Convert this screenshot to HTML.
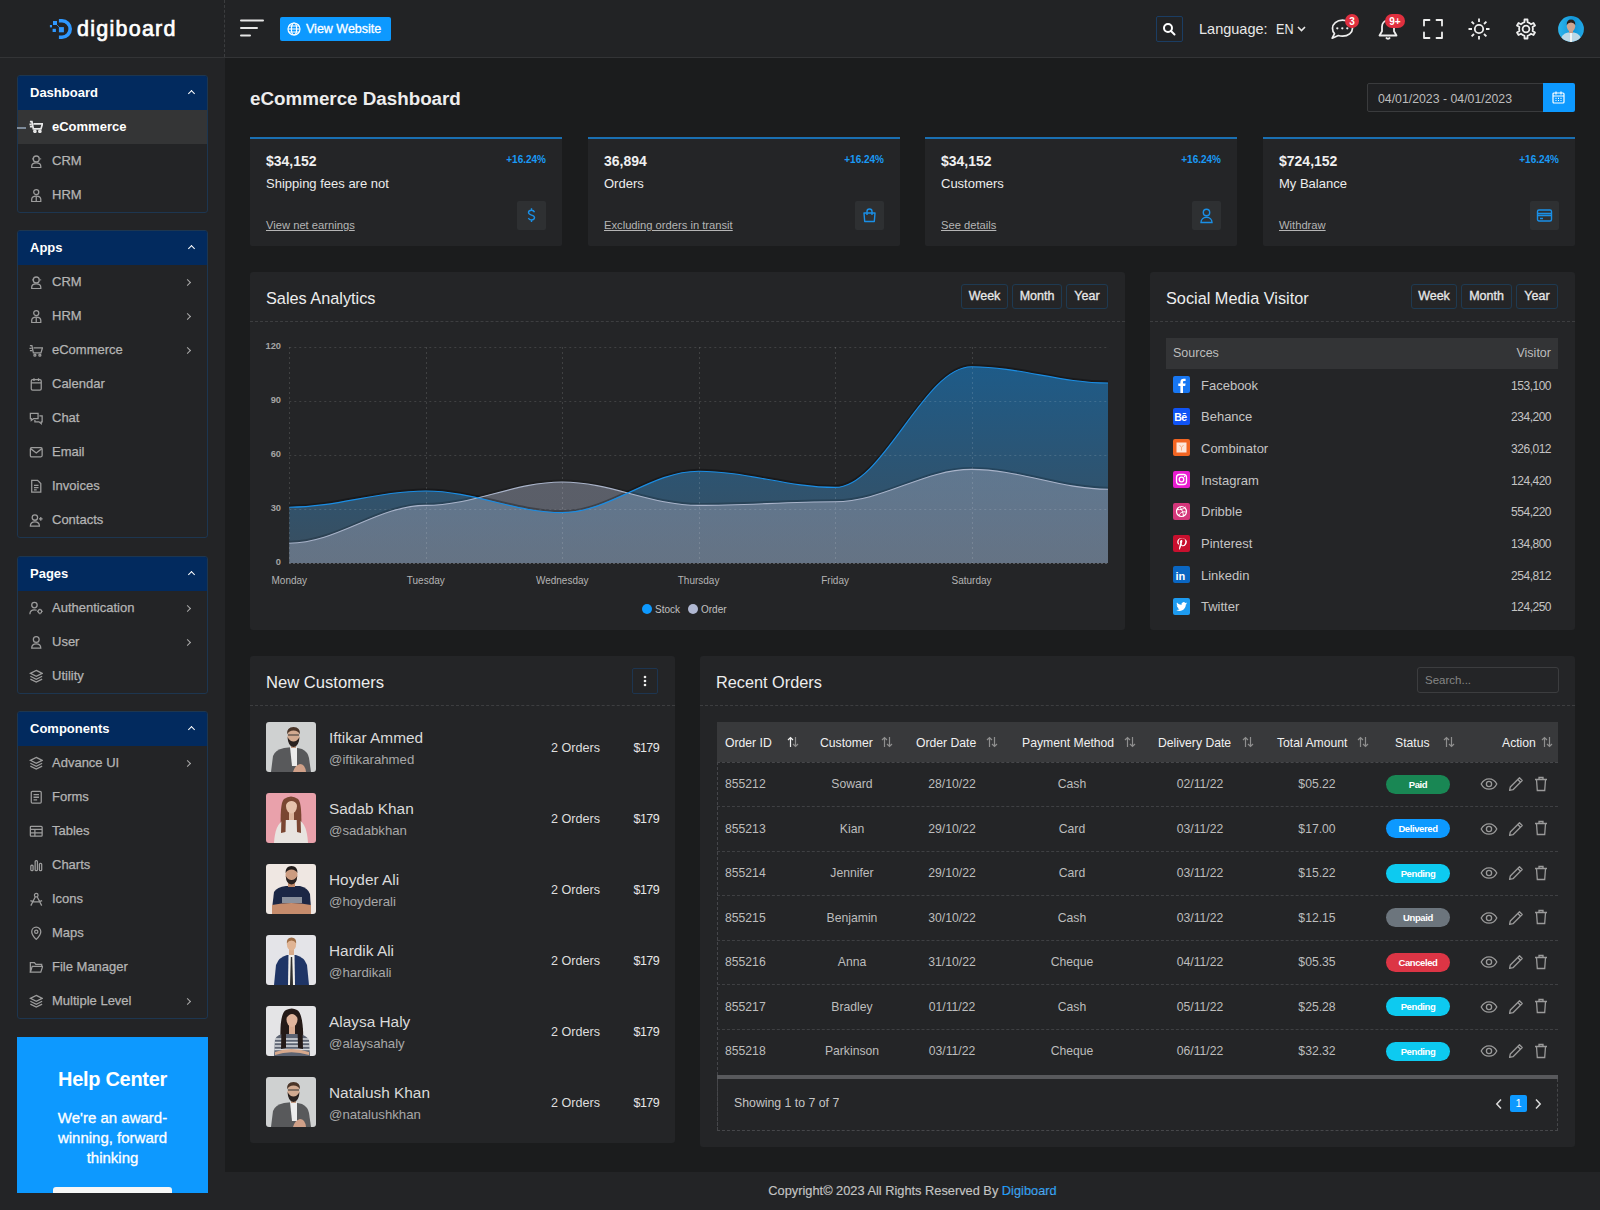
<!DOCTYPE html>
<html><head><meta charset="utf-8">
<style>
*{box-sizing:border-box;margin:0;padding:0}
html,body{width:1600px;height:1210px;overflow:hidden;background:#1b1c1d;font-family:"Liberation Sans",sans-serif;color:#d4d4d4}
.abs{position:absolute}
#hdr{position:absolute;left:0;top:0;width:1600px;height:58px;background:#222325;border-bottom:1px solid #333436}
#side{position:absolute;left:0;top:58px;width:225px;height:1152px;background:#232426}
#hdrdiv{position:absolute;left:224px;top:0;height:57px;border-left:1px dashed #3c3d3f}
#main{position:absolute;left:225px;top:58px;width:1375px;height:1114px;background:#1b1c1d}
#foot{position:absolute;left:225px;top:1172px;width:1375px;height:38px;background:#232426;text-align:center;font-size:12.8px;line-height:38px;color:#c4c4c4;-webkit-text-stroke:0.15px #c4c4c4}
#foot b{font-weight:normal;color:#0d99ff}
.grp{position:absolute;left:17px;width:191px;border:1px solid #1d3650;border-radius:3px;background:#232426;overflow:hidden}
.gh{height:34px;background:#022a5e;color:#fff;font-size:13px;font-weight:bold;padding-left:12px;line-height:34px;position:relative}
.gh:after{content:"";position:absolute;right:13px;top:15px;width:4px;height:4px;border-left:1.5px solid #fff;border-top:1.5px solid #fff;transform:rotate(45deg)}
.it{height:34px;line-height:34px;font-size:13px;color:#b4b4b4;padding-left:34px;position:relative;-webkit-text-stroke:0.25px #b4b4b4}
.it svg{position:absolute;left:10.5px;top:9.5px;width:14.5px;height:14.5px;fill:none;stroke:#9c9c9c;stroke-width:1.4}
.it.ch:after{content:"";position:absolute;right:17px;top:15px;width:4px;height:4px;border-right:1.3px solid #aaa;border-top:1.3px solid #aaa;transform:rotate(45deg)}
.it.act{background:#343536;color:#fff;font-weight:bold;-webkit-text-stroke:0}
.it.act svg{stroke:#e8e8e8;stroke-width:1.9;top:8.5px}
.card{position:absolute;background:#242527;border-radius:2px}

.stat{position:absolute;top:79px;width:312px;height:109px;background:#242527;border-top:2px solid #1a6fb2;border-radius:0 0 2px 2px}
.stat .v{position:absolute;left:16px;top:14px;font-size:14px;font-weight:bold;color:#f0f0f0}
.stat .p{position:absolute;right:16px;top:15px;font-size:10px;font-weight:bold;color:#1a9af5}
.stat .l{position:absolute;left:16px;top:37px;font-size:13px;color:#ececec}
.stat .u{position:absolute;left:16px;top:80px;font-size:11.2px;color:#b5b5b5;text-decoration:underline;text-underline-offset:1px}
.stat .ib{position:absolute;right:16px;top:62px;width:29px;height:29px;background:#2e3032;border-radius:2px}
.stat .ib svg{position:absolute;left:6px;top:6px;width:17px;height:17px;fill:none;stroke:#1a8fe6;stroke-width:1.4}

.pnl{position:absolute;background:#242527;border-radius:3px}
.pt{position:absolute;left:16px;font-size:16.3px;color:#ededed;margin-top:1.5px}
.pline{position:absolute;left:0;right:0;border-top:1px dashed #3d3e40}
.btn{position:absolute;top:12px;height:25px;border:1px solid #1e3a52;border-radius:3px;font-size:12.5px;color:#e8e8e8;line-height:23px;text-align:center;-webkit-text-stroke:0.3px #e8e8e8}
.srow{position:absolute;left:16px;width:392px;height:31px;font-size:13px;color:#c4c4c4}
.srow .ic{position:absolute;left:7px;top:7px;width:17px;height:17px;border-radius:2px}
.srow .n{position:absolute;left:35px;top:8.5px}
.srow .c{position:absolute;right:7px;top:9.5px;font-size:12px;letter-spacing:-0.5px}

.cust{position:absolute;left:16px;width:393px;height:50px}
.cust .ph{position:absolute;left:0;top:0;width:50px;height:50px;border-radius:3px;overflow:hidden}
.cust .nm{position:absolute;left:63px;top:6.5px;font-size:15.4px;color:#dadada}
.cust .hd{position:absolute;left:63px;top:30px;font-size:13.2px;color:#a8a8a8}
.cust .or{position:absolute;left:285px;top:19px;font-size:12.6px;color:#dedede}
.cust .pr{position:absolute;right:0;top:19px;font-size:12.5px;color:#e6e6e6;letter-spacing:-0.6px}
.th{position:absolute;top:1px;height:40px;line-height:40px;font-size:12.2px;color:#f0f0f0}
.td{position:absolute;font-size:12.2px;color:#bdbdbd;text-align:center;margin-top:1px}
.bdg{position:absolute;width:64px;height:19px;border-radius:10px;color:#fff;font-size:9.5px;font-weight:bold;line-height:19px;text-align:center;letter-spacing:-0.4px}
</style></head><body>
<div id="hdr">
 <svg class="abs" style="left:45px;top:14px" width="32" height="28" viewBox="0 0 32 28">
  <path d="M13.9 5H17A10 10 0 0 1 17 25H13.9V21.4H17A6.4 6.4 0 0 0 17 8.6H13.9Z" fill="#2f98ff"/>
  <rect x="13.9" y="13.1" width="5" height="5.2" fill="#2f98ff"/>
  <rect x="8" y="7" width="4" height="4" fill="#2f98ff"/>
  <rect x="7.6" y="14.8" width="3.3" height="3.2" fill="#2f98ff"/>
  <rect x="4.9" y="11" width="2.1" height="2.4" fill="#2f98ff"/>
  <path d="M11.5 10.5L14.5 13.5" stroke="#2f98ff" stroke-width="0.7"/>
 </svg>
 <div class="abs" style="left:77px;top:17px;font-size:21.5px;color:#fff;letter-spacing:1.25px;-webkit-text-stroke:0.7px #fff">digiboard</div>
 <svg class="abs" style="left:240px;top:18px" width="24" height="20" viewBox="0 0 24 20"><path d="M1 2.5H23M1 10H17M1 17.5H10" stroke="#e6e6e6" stroke-width="2" stroke-linecap="round"/></svg>
 <div class="abs" style="left:280px;top:17px;width:111px;height:24px;background:#0d99ff;border-radius:2px;color:#fff;font-size:12.5px;line-height:24px;padding-left:26px;-webkit-text-stroke:0.3px #fff">View Website</div>
 <svg class="abs" style="left:287px;top:22px" width="14" height="14" viewBox="0 0 14 14" fill="none" stroke="#fff" stroke-width="1.2"><circle cx="7" cy="7" r="6"/><ellipse cx="7" cy="7" rx="2.6" ry="6"/><path d="M1 7H13M2 4H12M2 10H12"/></svg>
 <div class="abs" style="left:1156px;top:16px;width:27px;height:26px;border:1px solid #1b3d63;border-radius:2px"></div>
 <svg class="abs" style="left:1162px;top:22px" width="14" height="14" viewBox="0 0 14 14" fill="none" stroke="#fff" stroke-width="2"><circle cx="6" cy="6" r="4"/><path d="M9 9L12.5 12.5" stroke-linecap="round"/></svg>
 <div class="abs" style="left:1199px;top:21px;font-size:14.5px;color:#e8e8e8;white-space:pre">Language:</div><div class="abs" style="left:1275.5px;top:21px;font-size:14.5px;color:#e8e8e8;transform:scaleX(0.87);transform-origin:0 0">EN</div>
 <svg class="abs" style="left:1297px;top:26px" width="9" height="6" viewBox="0 0 9 6"><path d="M1 1L4.5 4.5L8 1" fill="none" stroke="#e8e8e8" stroke-width="1.6"/></svg>
 <svg class="abs" style="left:1329px;top:17px" width="26" height="24" viewBox="0 0 26 24" fill="none" stroke="#eee" stroke-width="1.7" stroke-linejoin="round"><path d="M13.5 3.2C19.300 3.200 23.500 6.800 23.500 11.200C23.500 15.600 19.300 19.200 13.500 19.200C12 19.200 10.600 19 9.300 18.500L3.200 21.200L5.500 16.600C4 15.200 3.500 13.300 3.500 11.200C3.500 6.800 7.700 3.200 13.500 3.200Z"/><circle cx="8.3" cy="11.3" r="1.15" fill="#eee" stroke="none"/><circle cx="13.3" cy="11.3" r="1.15" fill="#eee" stroke="none"/><circle cx="18.3" cy="11.3" r="1.15" fill="#eee" stroke="none"/></svg>
 <div class="abs" style="left:1345px;top:14px;width:14px;height:14px;border-radius:7px;background:#e0303f;color:#fff;font-size:10px;font-weight:bold;line-height:15px;text-align:center">3</div>
 <svg class="abs" style="left:1376px;top:17px" width="24" height="25" viewBox="0 0 24 25" fill="none" stroke="#eee" stroke-width="1.8"><path d="M12 3.5c-3.6 0-6 2.8-6 6.3v4.5L3.5 18.5h17L18 14.3V9.8c0-3.5-2.4-6.3-6-6.3z" stroke-linejoin="round"/><path d="M10 20.6c.5.8 1.1 1.2 2 1.2s1.5-.4 2-1.2"/></svg>
 <div class="abs" style="left:1385px;top:14px;width:20px;height:14px;border-radius:7px;background:#e0303f;color:#fff;font-size:10px;font-weight:bold;line-height:15px;text-align:center">9+</div>
 <svg class="abs" style="left:1422px;top:18px" width="22" height="22" viewBox="0 0 22 22" fill="none" stroke="#eee" stroke-width="1.8" stroke-linejoin="round" stroke-linecap="round"><path d="M2 7.5V2H7.5M14.5 2H20V7.5M20 14.5V20H14.5M7.5 20H2V14.5"/></svg>
 <svg class="abs" style="left:1467px;top:17px" width="24" height="24" viewBox="0 0 24 24" fill="none" stroke="#eee" stroke-width="1.8"><circle cx="12" cy="12" r="4.2"/><path d="M12 1.5v3.5M12 19v3.5M1.5 12H5M19 12h3.5M4.6 4.6l2.4 2.4M17 17l2.4 2.4M4.6 19.4L7 17M17 7l2.4-2.4"/></svg>
 <svg class="abs" style="left:1514px;top:17px" width="24" height="24" viewBox="0 0 24 24" fill="none" stroke="#eee" stroke-width="1.8" stroke-linejoin="round"><path d="M8.65 5.97 L10.45 5.28 L10.50 2.52 L13.50 2.52 L13.55 5.28 L15.55 6.09 L17.05 7.29 L19.46 5.96 L20.96 8.56 L18.60 9.98 L18.90 12.12 L18.60 14.02 L20.96 15.44 L19.46 18.04 L17.05 16.71 L15.35 18.03 L13.55 18.72 L13.50 21.48 L10.50 21.48 L10.45 18.72 L8.45 17.91 L6.95 16.71 L4.54 18.04 L3.04 15.44 L5.40 14.02 L5.10 11.88 L5.40 9.98 L3.04 8.56 L4.54 5.96 L6.95 7.29Z"/><circle cx="12" cy="12" r="3.4"/></svg>
 <svg class="abs" style="left:1558px;top:16px" width="26" height="26" viewBox="0 0 26 26"><defs><clipPath id="avc"><circle cx="13" cy="13" r="12.9"/></clipPath><linearGradient id="avg" x1="0" y1="0" x2="1" y2="0"><stop offset="0" stop-color="#2db4ec"/><stop offset="0.6" stop-color="#1296d8"/><stop offset="1" stop-color="#22a8e6"/></linearGradient></defs><g clip-path="url(#avc)"><rect width="26" height="26" fill="url(#avg)"/><path d="M2 26Q3 17.5 10 16.5L16 16.5Q23 17.5 24 26Z" fill="#bcd8e6"/><rect x="12" y="17" width="2" height="9" fill="#f0f6f8"/><rect x="11" y="12.5" width="4" height="4.5" fill="#c49c88"/><ellipse cx="13" cy="10.3" rx="4.2" ry="5.3" fill="#cfa590"/><path d="M8.7 9Q8.6 3.5 13 3.5Q17.4 3.5 17.3 9Q16 6.5 13 6.5Q10 6.5 8.7 9Z" fill="#2a201c"/></g></svg>
</div>
<div id="hdrdiv"></div>
<div id="side"><div class="grp" style="top:17px"><div class="gh">Dashboard</div><div class="it act"><svg viewBox="0 0 16 16"><path d="M1 3h2.2l1.6 8h8.4l1.6-5.5H5"/><circle cx="6.5" cy="13.5" r="1.1"/><circle cx="12" cy="13.5" r="1.1"/><path d="M0.5 6h2.5M1 8.5h2.5"/></svg>eCommerce</div><div class="it "><svg viewBox="0 0 16 16"><circle cx="8" cy="5.5" r="3.3"/><path d="M3 15v-1.5c0-2.2 2-3.8 5-3.8s5 1.6 5 3.8V15z"/><path d="M4.6 5.5h-1M12.4 5.5h1"/></svg>CRM</div><div class="it "><svg viewBox="0 0 16 16"><circle cx="8" cy="4.5" r="2.8"/><path d="M3 15v-2.5c0-2 2.2-3.5 5-3.5s5 1.5 5 3.5V15z"/><path d="M8 9v6"/></svg>HRM</div></div><div class="abs" style="left:17px;top:69px;width:9px;height:2px;background:#7d8a99"></div><div class="grp" style="top:172px"><div class="gh">Apps</div><div class="it ch"><svg viewBox="0 0 16 16"><circle cx="8" cy="5.5" r="3.3"/><path d="M3 15v-1.5c0-2.2 2-3.8 5-3.8s5 1.6 5 3.8V15z"/><path d="M4.6 5.5h-1M12.4 5.5h1"/></svg>CRM</div><div class="it ch"><svg viewBox="0 0 16 16"><circle cx="8" cy="4.5" r="2.8"/><path d="M3 15v-2.5c0-2 2.2-3.5 5-3.5s5 1.5 5 3.5V15z"/><path d="M8 9v6"/></svg>HRM</div><div class="it ch"><svg viewBox="0 0 16 16"><path d="M1 3h2.2l1.6 8h8.4l1.6-5.5H5"/><circle cx="6.5" cy="13.5" r="1.1"/><circle cx="12" cy="13.5" r="1.1"/><path d="M0.5 6h2.5M1 8.5h2.5"/></svg>eCommerce</div><div class="it "><svg viewBox="0 0 16 16"><rect x="2.5" y="3" width="11" height="11.5" rx="1.5"/><path d="M2.5 6.5h11M5.5 1.5v3M10.5 1.5v3"/></svg>Calendar</div><div class="it "><svg viewBox="0 0 16 16"><path d="M1.5 2.5h8.5v6H5l-2.5 2v-2h-1z"/><path d="M11.5 5.5h3v6.5h-1v2l-2.5-2H6.5v-2"/></svg>Chat</div><div class="it "><svg viewBox="0 0 16 16"><rect x="1.5" y="3" width="13" height="10" rx="1.3"/><path d="M1.8 4l6.2 4.8 6.2-4.8"/></svg>Email</div><div class="it "><svg viewBox="0 0 16 16"><path d="M3 1.5h6.5l3.5 3.5v9.5H3z"/><path d="M5.5 7h5M5.5 9.5h5M5.5 12h3"/></svg>Invoices</div><div class="it "><svg viewBox="0 0 16 16"><circle cx="6.5" cy="5" r="3"/><path d="M1.5 14.5c0-3 2.2-4.8 5-4.8s5 1.8 5 4.8z"/><path d="M13 4.5v4M11 6.5h4"/></svg>Contacts</div></div><div class="grp" style="top:498px"><div class="gh">Pages</div><div class="it ch"><svg viewBox="0 0 16 16"><circle cx="6" cy="4.5" r="3"/><path d="M1 14.5c0-3 2.2-4.8 5-4.8 1 0 1.8.2 2.5.5"/><circle cx="12" cy="11.5" r="2"/><path d="M12 8.5v1M12 13.5v1M9 11.5h1M14 11.5h1"/></svg>Authentication</div><div class="it ch"><svg viewBox="0 0 16 16"><circle cx="8" cy="5" r="3.2"/><path d="M3 14.5c0-3 2.2-4.8 5-4.8s5 1.8 5 4.8z"/></svg>User</div><div class="it "><svg viewBox="0 0 16 16"><path d="M8 1.5l6.5 3.3L8 8.1 1.5 4.8z"/><path d="M1.5 8l6.5 3.3L14.5 8M1.5 11.2l6.5 3.3 6.5-3.3"/></svg>Utility</div></div><div class="grp" style="top:653px"><div class="gh">Components</div><div class="it ch"><svg viewBox="0 0 16 16"><path d="M8 1.5l6.5 3.3L8 8.1 1.5 4.8z"/><path d="M1.5 8l6.5 3.3L14.5 8M1.5 11.2l6.5 3.3 6.5-3.3"/></svg>Advance UI</div><div class="it "><svg viewBox="0 0 16 16"><rect x="2.5" y="1.5" width="11" height="13" rx="1.3"/><path d="M5 5h6M5 8h6M5 11h4"/></svg>Forms</div><div class="it "><svg viewBox="0 0 16 16"><rect x="1.5" y="2.5" width="13" height="11" rx="1"/><path d="M1.5 6h13M1.5 9.8h13M6.5 6v7.5"/></svg>Tables</div><div class="it "><svg viewBox="0 0 16 16"><rect x="2" y="8" width="2.5" height="6" rx="1"/><rect x="6.8" y="3" width="2.5" height="11" rx="1"/><rect x="11.5" y="6" width="2.5" height="8" rx="1"/></svg>Charts</div><div class="it "><svg viewBox="0 0 16 16"><circle cx="8" cy="3.5" r="2"/><path d="M7 5.3L2 15M9 5.3l5 9.7M1.5 9.5c2 1 4.2 1.5 6.5 1.5s4.5-.5 6.5-1.5"/></svg>Icons</div><div class="it "><svg viewBox="0 0 16 16"><path d="M8 14.8s-5-4.8-5-8.5a5 5 0 0110 0c0 3.7-5 8.5-5 8.5z"/><circle cx="8" cy="6.3" r="1.8"/></svg>Maps</div><div class="it "><svg viewBox="0 0 16 16"><path d="M1.5 13.5V3h4.5l1.5 1.8h6.5v2"/><path d="M1.5 13.5l2-6.5h11.5l-2 6.5z"/></svg>File Manager</div><div class="it ch"><svg viewBox="0 0 16 16"><path d="M8 1.5l6.5 3.3L8 8.1 1.5 4.8z"/><path d="M1.5 8l6.5 3.3L14.5 8M1.5 11.2l6.5 3.3 6.5-3.3"/></svg>Multiple Level</div></div><div class="abs" style="left:17px;top:979px;width:191px;height:156px;background:#0d99ff;text-align:center;color:#fff;overflow:hidden">
<div style="position:absolute;left:0;width:191px;top:31px;font-size:20px;font-weight:bold;letter-spacing:-0.3px">Help Center</div>
<div style="position:absolute;left:15px;width:161px;top:71px;font-size:15px;line-height:20px;-webkit-text-stroke:0.3px #fff">We're an award-winning, forward thinking</div>
<div style="position:absolute;left:36px;top:150px;width:119px;height:20px;background:#f6f6f6;border-radius:3px"></div>
</div></div>
<div id="main">
<div class="abs" style="left:25px;top:30px;font-size:18.8px;font-weight:bold;color:#ededed">eCommerce Dashboard</div>
<div class="abs" style="left:1142px;top:25px;width:177px;height:29px;border:1px solid #3a3b3d;border-radius:2px 0 0 2px;background:#1f2022;font-size:12.3px;color:#bdbdbd;line-height:30px;padding-left:10px">04/01/2023 - 04/01/2023</div>
<div class="abs" style="left:1318px;top:25px;width:32px;height:29px;background:#0d99ff;border-radius:0 2px 2px 0"></div>
<svg class="abs" style="left:1327px;top:33px" width="13" height="13" viewBox="0 0 13 13" fill="none" stroke="#fff" stroke-width="1.2"><rect x="1" y="2" width="11" height="10" rx="1"/><path d="M1 5h11M4 0.5v3M9 0.5v3M3.5 7.3h1M6 7.3h1M8.5 7.3h1M3.5 9.5h1M6 9.5h1M8.5 9.5h1"/></svg>

<div class="stat" style="left:25px"><div class="v">$34,152</div><div class="p">+16.24%</div><div class="l">Shipping fees are not</div><div class="u">View net earnings</div>
<div class="ib"><svg viewBox="0 0 17 17"><path d="M11.5 5.2c-.4-1.2-1.6-2-3-2-1.8 0-3 1-3 2.4 0 3.2 6 1.8 6 5 0 1.4-1.3 2.4-3 2.4-1.5 0-2.7-.8-3.1-2M8.5 1.2v2M8.5 13v2"/></svg></div></div>
<div class="stat" style="left:363px"><div class="v">36,894</div><div class="p">+16.24%</div><div class="l">Orders</div><div class="u">Excluding orders in transit</div>
<div class="ib"><svg viewBox="0 0 17 17"><path d="M3 6h11l-.7 8.5H3.7z" stroke-linejoin="round"/><path d="M6 8V4.5a2.5 2.5 0 015 0V8"/></svg></div></div>
<div class="stat" style="left:700px"><div class="v">$34,152</div><div class="p">+16.24%</div><div class="l">Customers</div><div class="u">See details</div>
<div class="ib"><svg viewBox="0 0 17 17"><circle cx="8.5" cy="5.5" r="3.2"/><path d="M3 15.5c0-3.2 2.4-5.2 5.5-5.2s5.5 2 5.5 5.2z"/></svg></div></div>
<div class="stat" style="left:1038px"><div class="v">$724,152</div><div class="p">+16.24%</div><div class="l">My Balance</div><div class="u">Withdraw</div>
<div class="ib"><svg viewBox="0 0 17 17"><rect x="1.5" y="3" width="14" height="11" rx="1.5"/><path d="M1.5 6.5h14M1.5 8.5h14M4 11.5h3"/></svg></div></div>
<div class="pnl" style="left:25px;top:214px;width:875px;height:358px">
<div class="pt" style="top:15px">Sales Analytics</div>
<div class="btn" style="left:711px;width:47px">Week</div><div class="btn" style="left:762px;width:50px">Month</div><div class="btn" style="left:816px;width:42px">Year</div>
<div class="pline" style="top:49px"></div>
</div>
<div class="pnl" style="left:925px;top:214px;width:425px;height:358px">
<div class="pt" style="top:15px">Social Media Visitor</div>
<div class="btn" style="left:261px;width:46px">Week</div><div class="btn" style="left:311px;width:51px">Month</div><div class="btn" style="left:366px;width:42px">Year</div>
<div class="pline" style="top:49px"></div>
<div class="abs" style="left:16px;top:66px;width:392px;height:31px;background:#333436;font-size:12.5px;color:#bdbdbd;line-height:31px"><span style="position:absolute;left:7px">Sources</span><span style="position:absolute;right:7px">Visitor</span></div>
<div class="srow" style="top:97.0px"><svg class="ic" style="background:#1877f2" viewBox="0 0 17 17"><path d="M10 17V10h2.2l.4-2.5H10V6.2c0-.8.3-1.2 1.2-1.2h1.4V2.8c-.3 0-1.1-.1-2-.1-2 0-3.2 1.2-3.2 3.3v1.5H5.3V10h2.1v7" fill="#fff"/></svg><span class="n">Facebook</span><span class="c">153,100</span></div>
<div class="srow" style="top:128.7px"><svg class="ic" style="background:#1054f5" viewBox="0 0 17 17"><text x="1.2" y="12.8" font-size="10.5" font-weight="bold" fill="#fff" font-family="Liberation Sans" letter-spacing="-0.5">Bē</text></svg><span class="n">Behance</span><span class="c">234,200</span></div>
<div class="srow" style="top:160.4px"><svg class="ic" style="background:#f26522" viewBox="0 0 17 17"><rect x="3.5" y="3.5" width="10" height="10" fill="#fde6da"/><path d="M6.5 6l2 2.5 2-2.5M8.5 8.5v3" stroke="#f5a070" stroke-width=".8" fill="none"/></svg><span class="n">Combinator</span><span class="c">326,012</span></div>
<div class="srow" style="top:192.1px"><svg class="ic" style="background:#e81cd0" viewBox="0 0 17 17"><rect x="3.5" y="3.5" width="10" height="10" rx="3" fill="none" stroke="#fff" stroke-width="1.3"/><circle cx="8.5" cy="8.5" r="2.3" fill="none" stroke="#fff" stroke-width="1.3"/><circle cx="11.5" cy="5.5" r=".7" fill="#fff"/></svg><span class="n">Instagram</span><span class="c">124,420</span></div>
<div class="srow" style="top:223.8px"><svg class="ic" style="background:#d4367a" viewBox="0 0 17 17"><circle cx="8.5" cy="8.5" r="5" fill="none" stroke="#fff" stroke-width="1.2"/><path d="M4 6.5c3 .5 6.5 0 8.5-2.5M5.5 13c1.5-3.5 4.5-5 8-3.8M6.8 3.8c2 2.5 3.5 6 3.7 9.5" fill="none" stroke="#fff" stroke-width="1"/></svg><span class="n">Dribble</span><span class="c">554,220</span></div>
<div class="srow" style="top:255.5px"><svg class="ic" style="background:#c8102e" viewBox="0 0 17 17"><path d="M8.8 3C5.8 3 4.2 5 4.2 7c0 1.2.5 2.2 1.4 2.6.2 0 .3 0 .3-.2l.2-.6c0-.2 0-.3-.1-.4-.3-.4-.5-.8-.5-1.5 0-1.9 1.4-3.6 3.7-3.6 2 0 3.1 1.2 3.1 2.9 0 2.2-1 4-2.4 4-.8 0-1.4-.7-1.2-1.5.2-1 .7-2 .7-2.7 0-.6-.3-1.1-1-1.1-.8 0-1.4.8-1.4 1.9 0 .7.2 1.2.2 1.2l-1 4c-.3 1.2 0 2.600 0 2.800h.2c.1-.2 1-1.300 1.300-2.500l.5-1.900c.3.5 1 .9 1.800.9 2.300 0 3.900-2.100 3.900-5C13.500 5 11.600 3 8.800 3z" fill="#fff"/></svg><span class="n">Pinterest</span><span class="c">134,800</span></div>
<div class="srow" style="top:287.2px"><svg class="ic" style="background:#0a66c2" viewBox="0 0 17 17"><text x="2.5" y="13.5" font-size="11" font-weight="bold" fill="#fff" font-family="Liberation Sans">in</text></svg><span class="n">Linkedin</span><span class="c">254,812</span></div>
<div class="srow" style="top:318.9px"><svg class="ic" style="background:#1d9bf0" viewBox="0 0 17 17"><path d="M14 5.2c-.4.2-.8.3-1.3.4.5-.3.8-.7 1-1.2-.4.3-.9.4-1.4.5a2.2 2.2 0 00-3.8 2C6.700 6.800 5.100 6 4 4.600c-.6 1-.3 2.300.7 3-.4 0-.7-.1-1-.3 0 1.100.8 2 1.800 2.200-.3.1-.7.1-1 0 .3.900 1.100 1.500 2.100 1.500A4.400 4.400 0 013.300 12c1 .6 2.100 1 3.300 1 4 0 6.300-3.400 6.200-6.400.5-.3.800-.7 1.100-1.200z" fill="#fff"/></svg><span class="n">Twitter</span><span class="c">124,250</span></div>
</div>
<div class="pnl" style="left:25px;top:598px;width:425px;height:487px">
<div class="pt" style="top:15px;font-size:16.6px">New Customers</div>
<div class="abs" style="left:382px;top:12px;width:26px;height:26px;border:1px solid #1d3550;border-radius:2px"></div>
<svg class="abs" style="left:393px;top:18px" width="4" height="14" viewBox="0 0 4 14"><circle cx="2" cy="3" r="1.3" fill="#eee"/><circle cx="2" cy="7" r="1.3" fill="#eee"/><circle cx="2" cy="11" r="1.3" fill="#eee"/></svg>
<div class="pline" style="top:49px"></div>
<div class="cust" style="top:66px"><svg class="ph" viewBox="0 0 50 50" style="background:#cfd1d1"><path d="M5 50L7 34Q9 28 18 26L27 25L36 27Q42 30 43 36L45 50Z" fill="#58595b"/><path d="M24 25H31L31 44H26Z" fill="#ececec"/><rect x="25" y="19" width="5" height="7" fill="#c49c84"/><ellipse cx="27.5" cy="14.5" rx="6" ry="8" fill="#d2aa90"/><path d="M21.5 15Q22 24.5 27.5 25Q33 24.5 33.5 15Q31 19.5 27.5 19.5Q24 19.5 21.5 15Z" fill="#2a2220"/><path d="M21 12.5Q20.5 5 27.5 5Q34.5 5 34 12.5Q32 8.5 27.5 8.5Q23 8.5 21 12.5Z" fill="#4a3528"/><path d="M22 13h11" stroke="#333" stroke-width="1"/><path d="M27 50Q29 43 34 42Q39 42 40 50Z" fill="#d0a088"/></svg><div class="nm">Iftikar Ammed</div><div class="hd">@iftikarahmed</div><div class="or">2 Orders</div><div class="pr">$179</div></div>
<div class="cust" style="top:137px"><svg class="ph" viewBox="0 0 50 50" style="background:#e9a1ab"><path d="M15 41Q13.5 10 18 6Q25 1 32 6Q36.5 10 35 41Z" fill="#7a4632"/><path d="M8 50Q9 31 18 27L33 27Q41 31 42 50Z" fill="#e8e4e0"/><path d="M15 40L15.5 22L20 20L19.5 39Z M35 40L34.5 22L30.5 20L31 39Z" fill="#7a4632"/><rect x="23" y="18" width="5" height="9" fill="#dcb49c"/><ellipse cx="25.5" cy="13" rx="5.5" ry="7.5" fill="#e6c2ac"/><path d="M19.5 12Q20 5 25.5 5Q31 5 31.5 12Q29 8 25.5 8Q22 8 19.5 12Z" fill="#7a4632"/></svg><div class="nm">Sadab Khan</div><div class="hd">@sadabkhan</div><div class="or">2 Orders</div><div class="pr">$179</div></div>
<div class="cust" style="top:208px"><svg class="ph" viewBox="0 0 50 50" style="background:#efe7e2"><path d="M6 45L8 28Q11 23 20 22L34 22Q42 24 44 30L45 45Z" fill="#1c2745"/><rect x="16" y="33" width="20" height="6" fill="#8a909c"/><path d="M6 41Q25 37 45 41L45 50L6 50Z" fill="#c68c6c"/><rect x="22" y="17" width="7" height="6" fill="#bf8868"/><ellipse cx="25.5" cy="11" rx="6" ry="8" fill="#cc9c80"/><path d="M19.8 12Q20 20 25.5 20.5Q31 20 31.2 12Q29 16 25.5 16Q22 16 19.8 12Z" fill="#2a2220"/><path d="M19.5 9Q19.5 2 25.5 2Q31.5 2 31.5 9Q29.5 5.5 25.5 5.5Q21.5 5.5 19.5 9Z" fill="#221c1a"/></svg><div class="nm">Hoyder Ali</div><div class="hd">@hoyderali</div><div class="or">2 Orders</div><div class="pr">$179</div></div>
<div class="cust" style="top:279px"><svg class="ph" viewBox="0 0 50 50" style="background:#e4e4e8"><path d="M8 50L10 30Q13 22 21 20L30 20Q38 22 41 30L43 50Z" fill="#1f3566"/><path d="M22.5 20H28.5L29 50H22Z" fill="#f2f0ec"/><path d="M24.8 22H26.2L27 50H24Z" fill="#2e2e2e"/><rect x="23" y="13" width="5" height="7" fill="#d8ac8c"/><ellipse cx="25.5" cy="9.5" rx="4.6" ry="6" fill="#e0b494"/><path d="M20.8 8.5Q20.5 2.5 25.5 2.5Q30.5 2.5 30.2 8.5Q28.5 5.5 25.5 5.5Q22.5 5.5 20.8 8.5Z" fill="#9c6c44"/></svg><div class="nm">Hardik Ali</div><div class="hd">@hardikali</div><div class="or">2 Orders</div><div class="pr">$179</div></div>
<div class="cust" style="top:350px"><svg class="ph" viewBox="0 0 50 50" style="background:#e4e4e6"><path d="M15 44Q12.5 8 20 4Q26 1 31 4Q38.5 8 37 44Z" fill="#241a18"/><path d="M8 50L9 33Q12 28 18 28L33 28Q40 29 43 34L44 50Z" fill="#5c6372"/><path d="M9 33H43M8.8 36.5H43.5M8.6 40H43.8M8.4 43.5H44" stroke="#d8dade" stroke-width="1.3"/><path d="M15 43L15.5 22L20 20L20 42Z M37 43L36.5 22L31.5 20L32 42Z" fill="#241a18"/><path d="M9 46Q25 40 43 46L43 49Q25 43.5 9 49Z" fill="#d6a88c"/><rect x="23" y="18" width="6" height="10" fill="#d8aa90"/><ellipse cx="26" cy="13.5" rx="5.5" ry="7.5" fill="#e0b49c"/><path d="M20.5 12Q21 5 26 5Q31 5 31.5 12Q29 8 26 8Q23 8 20.5 12Z" fill="#241a18"/></svg><div class="nm">Alaysa Haly</div><div class="hd">@alaysahaly</div><div class="or">2 Orders</div><div class="pr">$179</div></div>
<div class="cust" style="top:421px"><svg class="ph" viewBox="0 0 50 50" style="background:#cfd1d1"><path d="M5 50L7 34Q9 28 18 26L27 25L36 27Q42 30 43 36L45 50Z" fill="#58595b"/><path d="M24 25H31L31 44H26Z" fill="#ececec"/><rect x="25" y="19" width="5" height="7" fill="#c49c84"/><ellipse cx="27.5" cy="14.5" rx="6" ry="8" fill="#d2aa90"/><path d="M21.5 15Q22 24.5 27.5 25Q33 24.5 33.5 15Q31 19.5 27.5 19.5Q24 19.5 21.5 15Z" fill="#2a2220"/><path d="M21 12.5Q20.5 5 27.5 5Q34.5 5 34 12.5Q32 8.5 27.5 8.5Q23 8.5 21 12.5Z" fill="#4a3528"/><path d="M22 13h11" stroke="#333" stroke-width="1"/><path d="M27 50Q29 43 34 42Q39 42 40 50Z" fill="#d0a088"/></svg><div class="nm">Natalush Khan</div><div class="hd">@natalushkhan</div><div class="or">2 Orders</div><div class="pr">$179</div></div>
</div>
<div class="pnl" style="left:475px;top:598px;width:875px;height:491px">
<div class="pt" style="top:15px">Recent Orders</div>
<div class="abs" style="left:717px;top:11px;width:142px;height:26px;border:1px solid #3c3d3f;border-radius:3px;font-size:11.5px;color:#858585;line-height:25px;padding-left:7px">Search...</div>
<div class="pline" style="top:49px"></div>
<div class="abs" style="left:17px;top:66px;width:841px;height:40px;background:#38393b">
<div class="th" style="left:8px">Order ID</div><svg class="abs" style="left:70px;top:14px" width="12" height="12" viewBox="0 0 12 12" fill="none" stroke-width="1.2"><path d="M3.5 11V1.5M1 4l2.5-2.5L6 4" stroke="#f0f0f0"/><path d="M8.5 1v9.5M6 8l2.5 2.5L11 8" stroke="#8e8e8e"/></svg><div class="th" style="left:103px">Customer</div><svg class="abs" style="left:164px;top:14px" width="12" height="12" viewBox="0 0 12 12" fill="none" stroke-width="1.2"><path d="M3.5 11V1.5M1 4l2.5-2.5L6 4" stroke="#8e8e8e"/><path d="M8.5 1v9.5M6 8l2.5 2.5L11 8" stroke="#8e8e8e"/></svg><div class="th" style="left:199px">Order Date</div><svg class="abs" style="left:269px;top:14px" width="12" height="12" viewBox="0 0 12 12" fill="none" stroke-width="1.2"><path d="M3.5 11V1.5M1 4l2.5-2.5L6 4" stroke="#8e8e8e"/><path d="M8.5 1v9.5M6 8l2.5 2.5L11 8" stroke="#8e8e8e"/></svg><div class="th" style="left:305px">Payment Method</div><svg class="abs" style="left:407px;top:14px" width="12" height="12" viewBox="0 0 12 12" fill="none" stroke-width="1.2"><path d="M3.5 11V1.5M1 4l2.5-2.5L6 4" stroke="#8e8e8e"/><path d="M8.5 1v9.5M6 8l2.5 2.5L11 8" stroke="#8e8e8e"/></svg><div class="th" style="left:441px">Delivery Date</div><svg class="abs" style="left:525px;top:14px" width="12" height="12" viewBox="0 0 12 12" fill="none" stroke-width="1.2"><path d="M3.5 11V1.5M1 4l2.5-2.5L6 4" stroke="#8e8e8e"/><path d="M8.5 1v9.5M6 8l2.5 2.5L11 8" stroke="#8e8e8e"/></svg><div class="th" style="left:560px">Total Amount</div><svg class="abs" style="left:640px;top:14px" width="12" height="12" viewBox="0 0 12 12" fill="none" stroke-width="1.2"><path d="M3.5 11V1.5M1 4l2.5-2.5L6 4" stroke="#8e8e8e"/><path d="M8.5 1v9.5M6 8l2.5 2.5L11 8" stroke="#8e8e8e"/></svg><div class="th" style="left:678px">Status</div><svg class="abs" style="left:726px;top:14px" width="12" height="12" viewBox="0 0 12 12" fill="none" stroke-width="1.2"><path d="M3.5 11V1.5M1 4l2.5-2.5L6 4" stroke="#8e8e8e"/><path d="M8.5 1v9.5M6 8l2.5 2.5L11 8" stroke="#8e8e8e"/></svg><div class="th" style="left:785px">Action</div><svg class="abs" style="left:824px;top:14px" width="12" height="12" viewBox="0 0 12 12" fill="none" stroke-width="1.2"><path d="M3.5 11V1.5M1 4l2.5-2.5L6 4" stroke="#8e8e8e"/><path d="M8.5 1v9.5M6 8l2.5 2.5L11 8" stroke="#8e8e8e"/></svg></div>
<div class="abs" style="left:17px;top:106px;height:368px;border-left:1px dashed #45464a"></div>
<div class="td" style="left:25px;top:120.0px;text-align:left">855212</div><div class="td" style="left:92px;width:120px;top:120.0px">Soward</div><div class="td" style="left:192px;width:120px;top:120.0px">28/10/22</div><div class="td" style="left:312px;width:120px;top:120.0px">Cash</div><div class="td" style="left:440px;width:120px;top:120.0px">02/11/22</div><div class="td" style="left:557px;width:120px;top:120.0px">$05.22</div><div class="bdg" style="left:686px;top:118.5px;background:#198754">Paid</div><svg class="abs" style="left:780px;top:120.0px" width="18" height="16" viewBox="0 0 18 16" fill="none" stroke="#9a9a9a" stroke-width="1.3"><path d="M1.2 8C3 4.5 5.8 2.8 9 2.8s6 1.7 7.8 5.2C15 11.5 12.2 13.2 9 13.2S3 11.5 1.2 8z"/><circle cx="9" cy="8" r="2.6"/></svg><svg class="abs" style="left:808px;top:120.0px" width="16" height="16" viewBox="0 0 16 16" fill="none" stroke="#9a9a9a" stroke-width="1.3"><path d="M11.5 1.8l2.7 2.7L5 13.7 1.6 14.4l.7-3.4z" stroke-linejoin="round"/><path d="M9.8 3.5l2.7 2.7"/></svg><svg class="abs" style="left:834px;top:119.5px" width="14" height="16" viewBox="0 0 14 16" fill="none" stroke="#9a9a9a" stroke-width="1.3"><path d="M1 3.5h12M5 3.5V1.5h4v2M2.5 3.5l.8 11h7.4l.8-11"/></svg>
<div class="abs" style="left:17px;width:841px;top:150.0px;border-top:1px dashed #3f4043"></div>
<div class="td" style="left:25px;top:164.5px;text-align:left">855213</div><div class="td" style="left:92px;width:120px;top:164.5px">Kian</div><div class="td" style="left:192px;width:120px;top:164.5px">29/10/22</div><div class="td" style="left:312px;width:120px;top:164.5px">Card</div><div class="td" style="left:440px;width:120px;top:164.5px">03/11/22</div><div class="td" style="left:557px;width:120px;top:164.5px">$17.00</div><div class="bdg" style="left:686px;top:163.0px;background:#0d99ff">Delivered</div><svg class="abs" style="left:780px;top:164.5px" width="18" height="16" viewBox="0 0 18 16" fill="none" stroke="#9a9a9a" stroke-width="1.3"><path d="M1.2 8C3 4.5 5.8 2.8 9 2.8s6 1.7 7.8 5.2C15 11.5 12.2 13.2 9 13.2S3 11.5 1.2 8z"/><circle cx="9" cy="8" r="2.6"/></svg><svg class="abs" style="left:808px;top:164.5px" width="16" height="16" viewBox="0 0 16 16" fill="none" stroke="#9a9a9a" stroke-width="1.3"><path d="M11.5 1.8l2.7 2.7L5 13.7 1.6 14.4l.7-3.4z" stroke-linejoin="round"/><path d="M9.8 3.5l2.7 2.7"/></svg><svg class="abs" style="left:834px;top:164.0px" width="14" height="16" viewBox="0 0 14 16" fill="none" stroke="#9a9a9a" stroke-width="1.3"><path d="M1 3.5h12M5 3.5V1.5h4v2M2.5 3.5l.8 11h7.4l.8-11"/></svg>
<div class="abs" style="left:17px;width:841px;top:194.5px;border-top:1px dashed #3f4043"></div>
<div class="td" style="left:25px;top:209.0px;text-align:left">855214</div><div class="td" style="left:92px;width:120px;top:209.0px">Jennifer</div><div class="td" style="left:192px;width:120px;top:209.0px">29/10/22</div><div class="td" style="left:312px;width:120px;top:209.0px">Card</div><div class="td" style="left:440px;width:120px;top:209.0px">03/11/22</div><div class="td" style="left:557px;width:120px;top:209.0px">$15.22</div><div class="bdg" style="left:686px;top:207.5px;background:#0dcaf0">Pending</div><svg class="abs" style="left:780px;top:209.0px" width="18" height="16" viewBox="0 0 18 16" fill="none" stroke="#9a9a9a" stroke-width="1.3"><path d="M1.2 8C3 4.5 5.8 2.8 9 2.8s6 1.7 7.8 5.2C15 11.5 12.2 13.2 9 13.2S3 11.5 1.2 8z"/><circle cx="9" cy="8" r="2.6"/></svg><svg class="abs" style="left:808px;top:209.0px" width="16" height="16" viewBox="0 0 16 16" fill="none" stroke="#9a9a9a" stroke-width="1.3"><path d="M11.5 1.8l2.7 2.7L5 13.7 1.6 14.4l.7-3.4z" stroke-linejoin="round"/><path d="M9.8 3.5l2.7 2.7"/></svg><svg class="abs" style="left:834px;top:208.5px" width="14" height="16" viewBox="0 0 14 16" fill="none" stroke="#9a9a9a" stroke-width="1.3"><path d="M1 3.5h12M5 3.5V1.5h4v2M2.5 3.5l.8 11h7.4l.8-11"/></svg>
<div class="abs" style="left:17px;width:841px;top:239.0px;border-top:1px dashed #3f4043"></div>
<div class="td" style="left:25px;top:253.5px;text-align:left">855215</div><div class="td" style="left:92px;width:120px;top:253.5px">Benjamin</div><div class="td" style="left:192px;width:120px;top:253.5px">30/10/22</div><div class="td" style="left:312px;width:120px;top:253.5px">Cash</div><div class="td" style="left:440px;width:120px;top:253.5px">03/11/22</div><div class="td" style="left:557px;width:120px;top:253.5px">$12.15</div><div class="bdg" style="left:686px;top:252.0px;background:#6c757d">Unpaid</div><svg class="abs" style="left:780px;top:253.5px" width="18" height="16" viewBox="0 0 18 16" fill="none" stroke="#9a9a9a" stroke-width="1.3"><path d="M1.2 8C3 4.5 5.8 2.8 9 2.8s6 1.7 7.8 5.2C15 11.5 12.2 13.2 9 13.2S3 11.5 1.2 8z"/><circle cx="9" cy="8" r="2.6"/></svg><svg class="abs" style="left:808px;top:253.5px" width="16" height="16" viewBox="0 0 16 16" fill="none" stroke="#9a9a9a" stroke-width="1.3"><path d="M11.5 1.8l2.7 2.7L5 13.7 1.6 14.4l.7-3.4z" stroke-linejoin="round"/><path d="M9.8 3.5l2.7 2.7"/></svg><svg class="abs" style="left:834px;top:253.0px" width="14" height="16" viewBox="0 0 14 16" fill="none" stroke="#9a9a9a" stroke-width="1.3"><path d="M1 3.5h12M5 3.5V1.5h4v2M2.5 3.5l.8 11h7.4l.8-11"/></svg>
<div class="abs" style="left:17px;width:841px;top:283.5px;border-top:1px dashed #3f4043"></div>
<div class="td" style="left:25px;top:298.0px;text-align:left">855216</div><div class="td" style="left:92px;width:120px;top:298.0px">Anna</div><div class="td" style="left:192px;width:120px;top:298.0px">31/10/22</div><div class="td" style="left:312px;width:120px;top:298.0px">Cheque</div><div class="td" style="left:440px;width:120px;top:298.0px">04/11/22</div><div class="td" style="left:557px;width:120px;top:298.0px">$05.35</div><div class="bdg" style="left:686px;top:296.5px;background:#dc3545">Canceled</div><svg class="abs" style="left:780px;top:298.0px" width="18" height="16" viewBox="0 0 18 16" fill="none" stroke="#9a9a9a" stroke-width="1.3"><path d="M1.2 8C3 4.5 5.8 2.8 9 2.8s6 1.7 7.8 5.2C15 11.5 12.2 13.2 9 13.2S3 11.5 1.2 8z"/><circle cx="9" cy="8" r="2.6"/></svg><svg class="abs" style="left:808px;top:298.0px" width="16" height="16" viewBox="0 0 16 16" fill="none" stroke="#9a9a9a" stroke-width="1.3"><path d="M11.5 1.8l2.7 2.7L5 13.7 1.6 14.4l.7-3.4z" stroke-linejoin="round"/><path d="M9.8 3.5l2.7 2.7"/></svg><svg class="abs" style="left:834px;top:297.5px" width="14" height="16" viewBox="0 0 14 16" fill="none" stroke="#9a9a9a" stroke-width="1.3"><path d="M1 3.5h12M5 3.5V1.5h4v2M2.5 3.5l.8 11h7.4l.8-11"/></svg>
<div class="abs" style="left:17px;width:841px;top:328.0px;border-top:1px dashed #3f4043"></div>
<div class="td" style="left:25px;top:342.5px;text-align:left">855217</div><div class="td" style="left:92px;width:120px;top:342.5px">Bradley</div><div class="td" style="left:192px;width:120px;top:342.5px">01/11/22</div><div class="td" style="left:312px;width:120px;top:342.5px">Cash</div><div class="td" style="left:440px;width:120px;top:342.5px">05/11/22</div><div class="td" style="left:557px;width:120px;top:342.5px">$25.28</div><div class="bdg" style="left:686px;top:341.0px;background:#0dcaf0">Pending</div><svg class="abs" style="left:780px;top:342.5px" width="18" height="16" viewBox="0 0 18 16" fill="none" stroke="#9a9a9a" stroke-width="1.3"><path d="M1.2 8C3 4.5 5.8 2.8 9 2.8s6 1.7 7.8 5.2C15 11.5 12.2 13.2 9 13.2S3 11.5 1.2 8z"/><circle cx="9" cy="8" r="2.6"/></svg><svg class="abs" style="left:808px;top:342.5px" width="16" height="16" viewBox="0 0 16 16" fill="none" stroke="#9a9a9a" stroke-width="1.3"><path d="M11.5 1.8l2.7 2.7L5 13.7 1.6 14.4l.7-3.4z" stroke-linejoin="round"/><path d="M9.8 3.5l2.7 2.7"/></svg><svg class="abs" style="left:834px;top:342.0px" width="14" height="16" viewBox="0 0 14 16" fill="none" stroke="#9a9a9a" stroke-width="1.3"><path d="M1 3.5h12M5 3.5V1.5h4v2M2.5 3.5l.8 11h7.4l.8-11"/></svg>
<div class="abs" style="left:17px;width:841px;top:372.5px;border-top:1px dashed #3f4043"></div>
<div class="td" style="left:25px;top:387.0px;text-align:left">855218</div><div class="td" style="left:92px;width:120px;top:387.0px">Parkinson</div><div class="td" style="left:192px;width:120px;top:387.0px">03/11/22</div><div class="td" style="left:312px;width:120px;top:387.0px">Cheque</div><div class="td" style="left:440px;width:120px;top:387.0px">06/11/22</div><div class="td" style="left:557px;width:120px;top:387.0px">$32.32</div><div class="bdg" style="left:686px;top:385.5px;background:#0dcaf0">Pending</div><svg class="abs" style="left:780px;top:387.0px" width="18" height="16" viewBox="0 0 18 16" fill="none" stroke="#9a9a9a" stroke-width="1.3"><path d="M1.2 8C3 4.5 5.8 2.8 9 2.8s6 1.7 7.8 5.2C15 11.5 12.2 13.2 9 13.2S3 11.5 1.2 8z"/><circle cx="9" cy="8" r="2.6"/></svg><svg class="abs" style="left:808px;top:387.0px" width="16" height="16" viewBox="0 0 16 16" fill="none" stroke="#9a9a9a" stroke-width="1.3"><path d="M11.5 1.8l2.7 2.7L5 13.7 1.6 14.4l.7-3.4z" stroke-linejoin="round"/><path d="M9.8 3.5l2.7 2.7"/></svg><svg class="abs" style="left:834px;top:386.5px" width="14" height="16" viewBox="0 0 14 16" fill="none" stroke="#9a9a9a" stroke-width="1.3"><path d="M1 3.5h12M5 3.5V1.5h4v2M2.5 3.5l.8 11h7.4l.8-11"/></svg>
<div class="abs" style="left:17px;width:841px;top:106px;border-top:1px dashed #46474a"></div>
<div class="abs" style="left:17px;width:841px;top:419px;height:4px;background:#58595c"></div>
<div class="abs" style="left:17px;width:841px;top:423px;height:52px;border:1px dashed #46474a;border-top:none"></div>
<div class="abs" style="left:34px;top:440px;font-size:12.3px;color:#c4c4c4">Showing 1 to 7 of 7</div>
<svg class="abs" style="left:795px;top:442px" width="8" height="12" viewBox="0 0 8 12"><path d="M6 1.5L1.8 6 6 10.5" fill="none" stroke="#dadada" stroke-width="1.5"/></svg><div class="abs" style="left:810px;top:439px;width:17px;height:17px;background:#0d99ff;border-radius:2px;color:#fff;font-size:11px;line-height:17px;text-align:center">1</div><svg class="abs" style="left:834px;top:442px" width="8" height="12" viewBox="0 0 8 12"><path d="M2 1.5L6.2 6 2 10.5" fill="none" stroke="#dadada" stroke-width="1.5"/></svg>
</div>
</div>
<!--CHART--><svg class="abs" style="left:0;top:0" width="1600" height="1210" viewBox="0 0 1600 1210" font-family="Liberation Sans">
<defs>
<linearGradient id="gs" gradientUnits="userSpaceOnUse" x1="0" y1="367" x2="0" y2="563"><stop offset="0" stop-color="#1e5b88"/><stop offset="1" stop-color="#3a4e5e"/></linearGradient>
<linearGradient id="go" gradientUnits="userSpaceOnUse" x1="0" y1="469" x2="0" y2="563"><stop offset="0" stop-color="#979eb1" stop-opacity="0.48"/><stop offset="1" stop-color="#979eb1" stop-opacity="0.46"/></linearGradient>
</defs>
<path d="M289.3,507.2 C337.1,507.2 378.0,491.0 425.8,491.0 C473.5,491.0 514.4,512.6 562.2,512.6 C610.0,512.6 650.9,471.2 698.6,471.2 C746.4,471.2 787.3,487.4 835.1,487.4 C882.9,487.4 923.8,366.8 971.5,366.8 C1019.3,366.8 1060.2,383.0 1108.0,383.0 L1108.0,563 L289.3,563 Z" fill="url(#gs)"/>
<path d="M289.3,543.2 C337.1,543.2 378.0,505.4 425.8,505.4 C473.5,505.4 514.4,482.0 562.2,482.0 C610.0,482.0 650.9,505.4 698.6,505.4 C746.4,505.4 787.3,501.8 835.1,501.8 C882.9,501.8 923.8,469.4 971.5,469.4 C1019.3,469.4 1060.2,489.2 1108.0,489.2 L1108.0,563 L289.3,563 Z" fill="url(#go)"/>
<g stroke="#ffffff" stroke-opacity="0.13" stroke-width="1" stroke-dasharray="2 3" fill="none"><path d="M289.3 509.5H1108"/><path d="M289.3 455.5H1108"/><path d="M289.3 401.5H1108"/><path d="M289.3 347.5H1108"/><path d="M289.5 347V563"/><path d="M426.5 347V563"/><path d="M562.5 347V563"/><path d="M699.5 347V563"/><path d="M835.5 347V563"/><path d="M972.5 347V563"/></g>
<path d="M289 563.5H1108" stroke="#5a5d62" stroke-width="1" stroke-dasharray="2 2"/>
<path d="M289.3,543.2 C337.1,543.2 378.0,505.4 425.8,505.4 C473.5,505.4 514.4,482.0 562.2,482.0 C610.0,482.0 650.9,505.4 698.6,505.4 C746.4,505.4 787.3,501.8 835.1,501.8 C882.9,501.8 923.8,469.4 971.5,469.4 C1019.3,469.4 1060.2,489.2 1108.0,489.2" fill="none" stroke="#000" stroke-opacity="0.18" stroke-width="2" transform="translate(0,-1.5)"/>
<path d="M289.3,507.2 C337.1,507.2 378.0,491.0 425.8,491.0 C473.5,491.0 514.4,512.6 562.2,512.6 C610.0,512.6 650.9,471.2 698.6,471.2 C746.4,471.2 787.3,487.4 835.1,487.4 C882.9,487.4 923.8,366.8 971.5,366.8 C1019.3,366.8 1060.2,383.0 1108.0,383.0" fill="none" stroke="#000" stroke-opacity="0.3" stroke-width="2" transform="translate(0,-1.5)"/>
<path d="M289.3,543.2 C337.1,543.2 378.0,505.4 425.8,505.4 C473.5,505.4 514.4,482.0 562.2,482.0 C610.0,482.0 650.9,505.4 698.6,505.4 C746.4,505.4 787.3,501.8 835.1,501.8 C882.9,501.8 923.8,469.4 971.5,469.4 C1019.3,469.4 1060.2,489.2 1108.0,489.2" fill="none" stroke="#a9b3c9" stroke-width="1.1"/>
<path d="M289.3,507.2 C337.1,507.2 378.0,491.0 425.8,491.0 C473.5,491.0 514.4,512.6 562.2,512.6 C610.0,512.6 650.9,471.2 698.6,471.2 C746.4,471.2 787.3,487.4 835.1,487.4 C882.9,487.4 923.8,366.8 971.5,366.8 C1019.3,366.8 1060.2,383.0 1108.0,383.0" fill="none" stroke="#1a8de4" stroke-width="1.15"/>
<g font-size="9.3" font-weight="bold" fill="#a4a4a4" text-anchor="end"><text x="281" y="564.5">0</text><text x="281" y="510.5">30</text><text x="281" y="456.5">60</text><text x="281" y="402.5">90</text><text x="281" y="348.5">120</text></g>
<g font-size="10" fill="#b4b4b4" text-anchor="middle"><text x="289.3" y="584">Monday</text><text x="425.8" y="584">Tuesday</text><text x="562.2" y="584">Wednesday</text><text x="698.6" y="584">Thursday</text><text x="835.1" y="584">Friday</text><text x="971.5" y="584">Saturday</text></g>
<circle cx="647" cy="609" r="5" fill="#0d99ff"/><text x="655" y="612.5" font-size="10" fill="#c0c0c0">Stock</text><circle cx="693" cy="609" r="5" fill="#b0b8d2"/><text x="701" y="612.5" font-size="10" fill="#c0c0c0">Order</text>
</svg><!--/CHART-->
<div id="foot">Copyright© 2023 All Rights Reserved By <b>Digiboard</b></div>
</body></html>
